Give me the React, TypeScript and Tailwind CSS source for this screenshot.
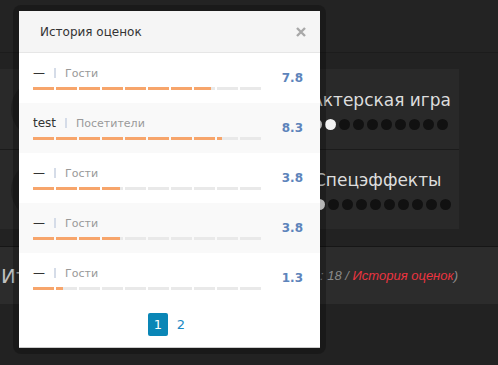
import React from "react";

type Vote = { name: string; group: string; score: number };

const votes: Vote[] = [
  { name: "—", group: "Гости", score: 7.8 },
  { name: "test", group: "Посетители", score: 8.3 },
  { name: "—", group: "Гости", score: 3.8 },
  { name: "—", group: "Гости", score: 3.8 },
  { name: "—", group: "Гости", score: 1.3 },
];

const criteria = [
  { title: "Актерская игра", value: 2 },
  { title: "Спецэффекты", value: 1 },
];

// 10 segments of 21px with 2px gaps; fill runs across the whole 228px
const ScoreBar = ({ score }: { score: number }) => {
  const fill = (score / 10) * 228;
  return (
    <div className="flex gap-[2px]">
      {Array.from({ length: 10 }).map((_, i) => {
        const w = Math.max(0, Math.min(21, fill - i * 23));
        return (
          <div key={i} className="h-[3px] w-[21px] bg-[#e9e9e9]">
            <div className="h-full bg-[#f7a56b]" style={{ width: w }} />
          </div>
        );
      })}
    </div>
  );
};

const Dots = ({ value }: { value: number }) => (
  <div className="flex gap-[3px]">
    {Array.from({ length: 10 }).map((_, i) => (
      <div
        key={i}
        className={`h-[11px] w-[11px] rounded-full ${
          i < value ? "bg-[#f2f2f2]" : "bg-[#111111]"
        }`}
      />
    ))}
  </div>
);

export default function App() {
  return (
    <div className="relative h-[365px] w-[498px] overflow-hidden bg-[#222222] font-['DejaVu_Sans',sans-serif]">
      {/* page behind the dialog */}
      <div className="h-[53px] border-b border-[#1c1c1c] bg-[#232323]" />
      <div className="pt-[16px]">
        <div className="w-[459px] bg-[#292929]">
          {criteria.map((c, idx) => (
            <div
              key={c.title}
              className={`flex h-[80px] items-center justify-between pr-[8px] ${
                idx > 0 ? "border-t border-[#1b1b1b]" : ""
              }`}
            >
              <div className="ml-[11px] h-[60px] w-[60px] rounded-full bg-[#202020]" />
              <div className="flex flex-col items-start pt-[1px]">
                <div className="text-[17px] leading-[20px] text-[#dddddd]">{c.title}</div>
                <div className="mt-[9px]">
                  <Dots value={c.value} />
                </div>
              </div>
            </div>
          ))}
        </div>
      </div>
      <div className="mt-[17px] flex h-[58px] items-center justify-between border-t border-[#161616] bg-[#2c2c2c] pl-[1px] pr-[40px]">
        <span className="text-[20px] text-[#c0c0c0]">Итог</span>
        <span className="font-['Liberation_Sans',sans-serif] text-[13px] italic text-[#8a8a8a]">
          (голосов: 18 / <span className="text-[#ea3440]">История оценок</span>)
        </span>
      </div>

      {/* dialog */}
      <div className="absolute left-[13px] top-[5px] rounded-lg bg-black/25 p-[6px]">
        <div className="w-[301px] border-b border-[#cccccc] bg-white">
          <div className="flex h-[42px] items-center justify-between border-b border-[#e6e6e6] bg-[#f5f5f5] pl-[21px] pr-[14px]">
            <span className="text-[12px] text-[#333333]">История оценок</span>
            <svg width="10" height="10" viewBox="0 0 10 10" className="mt-[1px]">
              <path d="M1 1L9 9M9 1L1 9" stroke="#a8a8a8" strokeWidth="2.4" />
            </svg>
          </div>
          {votes.map((v, i) => (
            <div
              key={i}
              className={`flex h-[50px] items-center justify-between pl-[14px] pr-[17px] ${
                i % 2 === 1 ? "bg-[#f9f9f9]" : "bg-white"
              }`}
            >
              <div className="flex flex-col">
                <div className="flex h-[13px] items-center">
                  <span className="text-[12px] leading-[13px] text-[#333333]">{v.name}</span>
                  <span className="mx-[9px] h-[10px] w-[2px] bg-[#d5dce8]" />
                  <span className="text-[11px] leading-[13px] text-[#999999]">{v.group}</span>
                </div>
                <div className="mt-[7px]">
                  <ScoreBar score={v.score} />
                </div>
              </div>
              <span className="text-[12px] font-bold text-[#5d84bb]">{v.score.toFixed(1)}</span>
            </div>
          ))}
          <div className="flex justify-center gap-[3px] pb-[11px] pt-[10px]">
            <span className="flex h-[23px] w-[20px] items-center justify-center rounded-[2px] bg-[#0a86b6] text-[13px] text-white">
              1
            </span>
            <span className="flex h-[23px] w-[20px] items-center justify-center text-[13px] text-[#1a88c4]">
              2
            </span>
          </div>
        </div>
      </div>
    </div>
  );
}
